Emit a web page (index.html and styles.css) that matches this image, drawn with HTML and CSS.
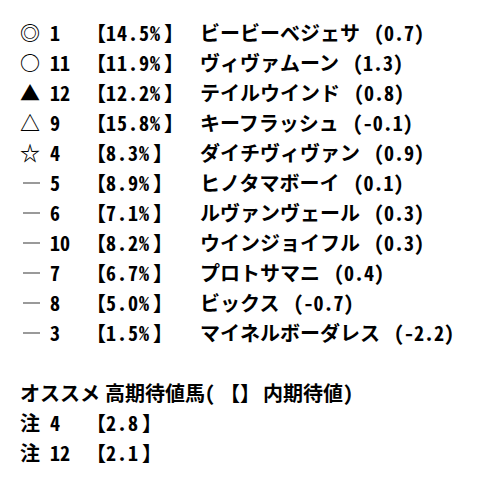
FILE: index.html
```html
<!DOCTYPE html>
<html lang="ja">
<head>
<meta charset="utf-8">
<link rel="stylesheet" href="styles.css">
</head>
<body>
<div class="sheet">
  <div class="list">
    <div class="row"><span class="mark">◎</span><span class="num">1</span><span class="odds">【<span class="fig">14.5%</span>】</span><span class="name">ビービーベジェサ<span class="val">(0.7)</span></span></div>
    <div class="row"><span class="mark">○</span><span class="num">11</span><span class="odds">【<span class="fig">11.9%</span>】</span><span class="name">ヴィヴァムーン<span class="val">(1.3)</span></span></div>
    <div class="row"><span class="mark">▲</span><span class="num">12</span><span class="odds">【<span class="fig">12.2%</span>】</span><span class="name">テイルウインド<span class="val">(0.8)</span></span></div>
    <div class="row"><span class="mark">△</span><span class="num">9</span><span class="odds">【<span class="fig">15.8%</span>】</span><span class="name">キーフラッシュ<span class="val">(-0.1)</span></span></div>
    <div class="row"><span class="mark">☆</span><span class="num">4</span><span class="odds">【<span class="fig">8.3%</span>】</span><span class="name">ダイチヴィヴァン<span class="val">(0.9)</span></span></div>
    <div class="row"><span class="mark"><span class="dash" aria-label="―"></span></span><span class="num">5</span><span class="odds">【<span class="fig">8.9%</span>】</span><span class="name">ヒノタマボーイ<span class="val">(0.1)</span></span></div>
    <div class="row"><span class="mark"><span class="dash" aria-label="―"></span></span><span class="num">6</span><span class="odds">【<span class="fig">7.1%</span>】</span><span class="name">ルヴァンヴェール<span class="val">(0.3)</span></span></div>
    <div class="row"><span class="mark"><span class="dash" aria-label="―"></span></span><span class="num">10</span><span class="odds">【<span class="fig">8.2%</span>】</span><span class="name">ウインジョイフル<span class="val">(0.3)</span></span></div>
    <div class="row"><span class="mark"><span class="dash" aria-label="―"></span></span><span class="num">7</span><span class="odds">【<span class="fig">6.7%</span>】</span><span class="name">プロトサマニ<span class="val">(0.4)</span></span></div>
    <div class="row"><span class="mark"><span class="dash" aria-label="―"></span></span><span class="num">8</span><span class="odds">【<span class="fig">5.0%</span>】</span><span class="name">ビックス<span class="val">(-0.7)</span></span></div>
    <div class="row"><span class="mark"><span class="dash" aria-label="―"></span></span><span class="num">3</span><span class="odds">【<span class="fig">1.5%</span>】</span><span class="name">マイネルボーダレス<span class="val">(-2.2)</span></span></div>
  </div>
  <div class="picks">
    <div class="title"><span class="gap">オススメ</span><span class="fig">高期待値馬(</span><span class="br">【】</span><span class="fig">内期待値)</span></div>
    <div class="row"><span class="mark">注</span><span class="num">4</span><span class="odds">【<span class="fig">2.8</span>】</span></div>
    <div class="row"><span class="mark">注</span><span class="num">12</span><span class="odds">【<span class="fig">2.1</span>】</span></div>
  </div>
</div>
</body>
</html>
```

FILE: styles.css
```css
html, body {
  margin: 0;
  padding: 0;
  background: #ffffff;
}

body {
  font-family: "Noto Sans CJK JP", "DejaVu Sans Mono", monospace;
  font-size: 20px;
  font-weight: 700;
  color: #000000;
}

.sheet {
  padding: 18px 20px 0 20px;
}

.list {
  display: flex;
  flex-direction: column;
}

.row {
  display: grid;
  grid-template-columns: 30px 36px 114px auto;
  line-height: 30px;
  height: 30px;
  white-space: nowrap;
}

.mark {
  width: 20px;
  display: flex;
  align-items: center;
  justify-content: center;
}

.dash {
  display: block;
  width: 21px;
  height: 2px;
  margin-left: 3px;
  background: #9a9a9a;
}

.num, .fig, .val {
  font-feature-settings: "hwid" 1;
}

.odds .fig {
  letter-spacing: 1px;
  margin-right: 3px;
}

.odds, .name {
  text-align: left;
}

.val {
  margin-left: 14px;
}

.picks {
  margin-top: 30px;
}

.title {
  display: flex;
  line-height: 30px;
  height: 30px;
  white-space: nowrap;
}

.gap {
  margin-right: 5px;
}

.br {
  margin: 0 3px 0 5px;
}
```
